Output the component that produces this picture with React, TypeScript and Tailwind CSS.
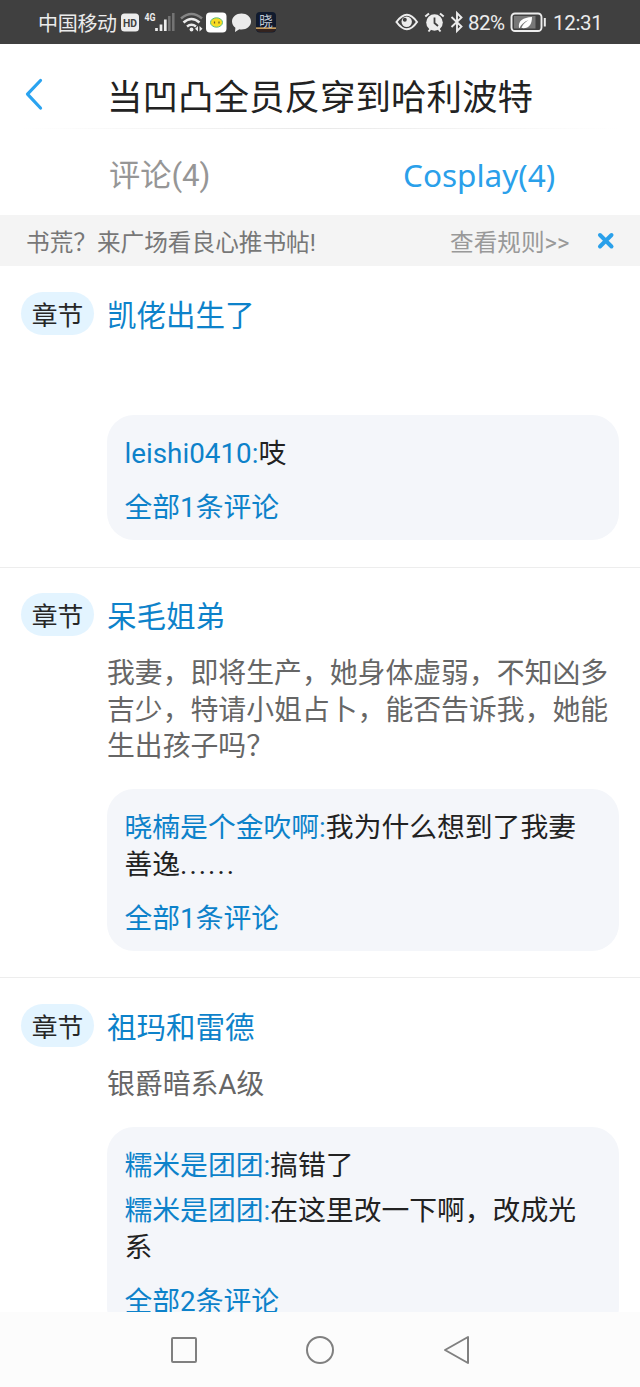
import React from "react";

const family =
  "font-[Roboto,'Noto_Sans_CJK_SC',sans-serif]";

function StatusBar() {
  return (
    <div className="flex h-[44px] shrink-0 items-center bg-[#404040] pl-[38px] text-[#ececec]">
      <span className="w-[80px] whitespace-nowrap pt-[4px] text-[20px] leading-[40px] tracking-[-0.3px]">中国移动</span>
      <svg className="ml-px h-[44px] w-[180px]" viewBox="119 0 180 44" fill="none">
        <rect x="121" y="13.500" width="18" height="18" rx="3.500" fill="#ececec" />
        <text x="130" y="27" textAnchor="middle" fontFamily="Roboto" fontSize="11.500" fontWeight="700" fill="#404040" textLength="14" lengthAdjust="spacingAndGlyphs">HD</text>
        <text x="144.500" y="21" fontFamily="Roboto" fontSize="11" fontWeight="700" fill="#ececec" textLength="11" lengthAdjust="spacingAndGlyphs">4G</text>
        <path d="M156.500 28v3M161 24.500v6.500" stroke="#ececec" strokeWidth="2.700" />
        <path d="M165.300 19.500v11.500" stroke="#ececec" strokeWidth="2.700" />
        <path d="M169.300 16v15M173.300 13v18" stroke="#747474" strokeWidth="2.500" />
        <path d="M181 18.500Q191.500 9.500 202 18.500" stroke="#858585" strokeWidth="2.500" />
        <path d="M183.500 22.500Q191.500 15.500 199.500 22.500M187 26.500Q191.500 23 196 26.500" stroke="#ececec" strokeWidth="2.600" />
        <circle cx="191.500" cy="29.500" r="1.900" fill="#ececec" />
        <path d="M198 26v5.500l-3-2.750zM199.500 26v5.500l3-2.750z" fill="#ececec" />
        <rect x="206" y="12.500" width="20.500" height="20" rx="4" fill="#fff" />
        <ellipse cx="216.500" cy="22.500" rx="6" ry="4.700" fill="#f8dc22" stroke="#56bd83" strokeWidth="1" />
        <path d="M214.500 21.500v2M219 21.500v2" stroke="#665520" strokeWidth="1.200" />
        <path d="M241.500 13.500c5.300 0 9.500 3.500 9.500 8s-4.200 8-9.500 8c-.8 0-1.500 0-2.200-.2l-4.300 2.700.4-4.300c-2.100-1.500-3.400-3.700-3.400-6.200 0-4.500 4.200-8 9.500-8z" fill="#ececec" />
        <rect x="256" y="12" width="20" height="20.500" rx="4" fill="#101a2d" />
        <path d="M256 27.300h20v1.700h-20z" fill="#c39b5e" />
        <path d="M256.500 29h19v.8l-1 1.200q-1 1-3 1h-11q-2 0-3-1l-1-1.200z" fill="#33231f" />
        <text x="266" y="25.500" textAnchor="middle" fontFamily="Noto Sans CJK SC" fontSize="13.500" fill="#c3cbd8">晓</text>
      </svg>
      <svg className="ml-[95px] h-[44px] w-[72px]" viewBox="394 0 72 44" fill="none">
        <path d="M396.500 22q10.500-14.500 20.500 0-10 14.500-20.500 0z" stroke="#ececec" strokeWidth="2.100" />
        <circle cx="406.700" cy="21.800" r="5.200" fill="#ececec" />
        <circle cx="404.800" cy="19.800" r="2" fill="#404040" />
        <circle cx="434.500" cy="22.500" r="8.300" fill="#ececec" />
        <path d="M434.500 17.500v5.500l3.500 3" stroke="#404040" strokeWidth="1.800" />
        <path d="M425.300 16.500l3.700-3M443.700 16.500l-3.700-3M428.500 31.500l2-2.500M440.500 31.500l-2-2.500" stroke="#ececec" strokeWidth="2" />
        <path d="M451.500 17l10 9.500-4.500 4.500V13l4.500 4.500-10 9.500" stroke="#ececec" strokeWidth="1.900" />
      </svg>
      <span className="ml-[2px] w-[40px] whitespace-nowrap pt-[3px] text-[20.500px] tracking-[-0.500px]">82%</span>
      <svg className="ml-px h-[44px] w-[40px]" viewBox="509 0 40 44" fill="none">
        <rect x="511.500" y="13.500" width="30" height="17.500" rx="3.500" stroke="#ececec" strokeWidth="1.900" />
        <path d="M514 16h21.500v12.500h-21.500z" fill="#777" />
        <path d="M519 28c-1-7.500 4-10.500 13-11 0 8-3.500 12-10.500 11 1-3 3-5.500 7-8-4.500 2-7.500 4.500-9 8z" fill="#fff" />
        <path d="M544.800 18v8.500" stroke="#ececec" strokeWidth="2" />
      </svg>
      <span className="ml-[4px] whitespace-nowrap pt-[3px] text-[20.500px] tracking-[-0.300px]">12:31</span>
    </div>
  );
}

function Chapter({ title, description, children, className }: {
  title: string; description?: React.ReactNode; children: React.ReactNode; className: string;
}) {
  return (
    <section className={`shrink-0 pl-[21px] pr-[21px] ${className}`}>
      <div className="flex h-[43px] items-start">
        <span className="h-[43px] w-[73px] rounded-full bg-[#e3f4ff] pt-[3px] text-center text-[25.800px] leading-[42px] text-[#262626]">章节</span>
        <h2 className="ml-[13px] pt-[3px] text-[29.500px] leading-[43px] text-[#0d82ca]">{title}</h2>
      </div>
      <div className="ml-[86px]">
        {description}
        {children}
      </div>
    </section>
  );
}

function Bubble({ children, count, className }: { children: React.ReactNode; count: number; className: string }) {
  return (
    <div className={`rounded-[27px] bg-[#f4f6fa] pl-[17.500px] pr-[15px] pt-[21px] pb-[13px] text-[27.800px] leading-[36.700px] text-[#222] ${className}`}>
      <div className="flex flex-col gap-[9px]">{children}</div>
      <div className="mt-[17.500px] text-[#0d82ca]">全部{count}条评论</div>
    </div>
  );
}

function Name({ children }: { children: React.ReactNode }) {
  return <span className="text-[#0d82ca]">{children}:</span>;
}

export default function App() {
  return (
    <div className={`flex h-[1387px] w-[640px] flex-col overflow-hidden bg-white ${family}`}>
      <StatusBar />
      <header className="flex h-[84px] shrink-0 items-center">
        <svg className="ml-[24px] mt-[16px] h-[34px] w-[20px]" viewBox="0 0 20 34" fill="none">
          <path d="M16.500 3.500L3.500 17.200L16.500 31" stroke="#2aa3f0" strokeWidth="3.200" strokeLinecap="round" strokeLinejoin="round" />
        </svg>
        <h1 className="ml-[63px] mt-[23px] whitespace-nowrap text-[35.500px] leading-[50px] text-[#222]">当凹凸全员反穿到哈利波特</h1>
      </header>
      <div className="mx-[20px] h-px shrink-0 bg-linear-to-r from-transparent via-[#e9e9e9] to-transparent" />
      <nav className="flex h-[86px] shrink-0 items-center">
        <div className="w-1/2 pl-[109px] pt-[8px] text-[31.200px] text-[#969696]">评论(4)</div>
        <div className="w-1/2 pl-[83px] pt-[5px] font-['Noto_Sans',sans-serif] text-[31.500px] text-[#2aa0ea]">Cosplay(4)</div>
      </nav>
      <div className="flex h-[51px] shrink-0 items-center bg-[#f4f4f4] pl-[26px] text-[23.650px] leading-[45px]">
        <span className="w-[424px] pt-[6px] text-[#777]">书荒？来广场看良心推书帖!</span>
        <span className="w-[146px] whitespace-nowrap pt-[6px] text-[#999]">查看规则&gt;&gt;</span>
        <svg className="h-[20px] w-[20px]" viewBox="0 0 20 20"><path d="M4 4l11.500 11.500M15.500 4L4 15.500" stroke="#2aa0ea" strokeWidth="4" strokeLinecap="round" /></svg>
      </div>
      <main className="flex min-h-0 flex-1 flex-col overflow-hidden">
        <Chapter title="凯佬出生了" className="h-[301px] pt-[26px]">
          <Bubble count={1} className="mt-[80px]">
            <p><Name>leishi0410</Name>吱</p>
          </Bubble>
        </Chapter>
        <Chapter
          title="呆毛姐弟"
          className="h-[410px] border-t border-[#ededed] pt-[25px]"
          description={<p className="-mr-[10px] pt-[20px] text-[27.850px] leading-[36.700px] text-[#666]">我妻，即将生产，她身体虚弱，不知凶多<br />吉少，特请小姐占卜，能否告诉我，她能<br />生出孩子吗？</p>}
        >
          <Bubble count={1} className="mt-[23px]">
            <p><Name>晓楠是个金吹啊</Name>我为什么想到了我妻<br />善逸<span className="tracking-[2px]">......</span></p>
          </Bubble>
        </Chapter>
        <Chapter
          title="祖玛和雷德"
          className="border-t border-[#ededed] pt-[26px]"
          description={<p className="pt-[20px] text-[27.850px] leading-[36.700px] text-[#666]">银爵暗系A级</p>}
        >
          <Bubble count={2} className="mt-[23px]">
            <p><Name>糯米是团团</Name>搞错了</p>
            <p><Name>糯米是团团</Name>在这里改一下啊，改成光<br />系</p>
          </Bubble>
        </Chapter>
      </main>
      <footer className="flex h-[75px] shrink-0 items-center justify-center gap-[108.500px] bg-[#fcfcfc] text-[#808080]">
        <svg className="h-[30px] w-[28px]" viewBox="0 0 28 30" fill="none" stroke="currentColor" strokeWidth="2"><rect x="2" y="3" width="24" height="24" rx="1" /></svg>
        <svg className="h-[30px] w-[28px]" viewBox="0 0 28 30" fill="none" stroke="currentColor" strokeWidth="2"><circle cx="14" cy="15" r="13" /></svg>
        <svg className="h-[30px] w-[28px]" viewBox="0 0 28 30" fill="none" stroke="currentColor" strokeWidth="2" strokeLinejoin="round"><path d="M25 2v26L2 15z" /></svg>
      </footer>
    </div>
  );
}
